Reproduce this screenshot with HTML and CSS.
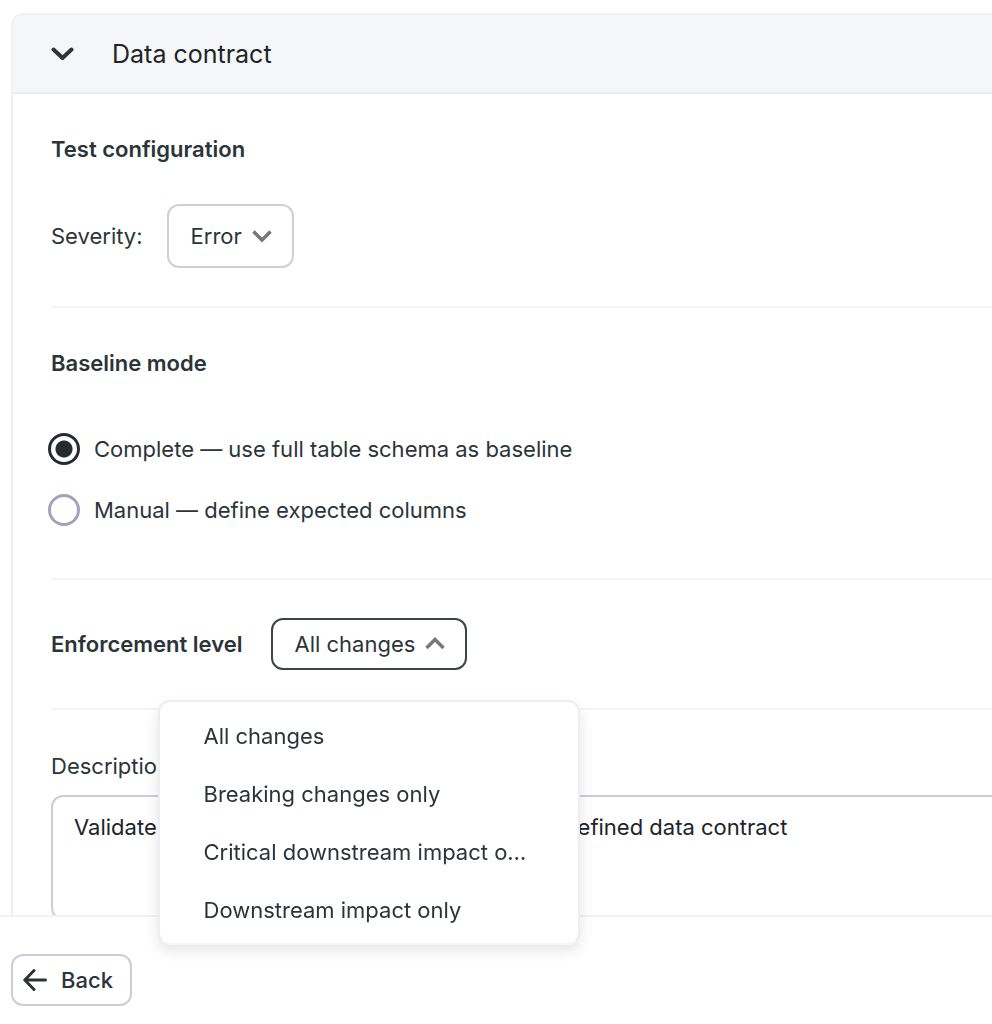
FILE: index.html
```
<!DOCTYPE html>
<html lang="en">
<head>
    <meta charset="utf-8">
    <meta name="viewport" content="width=device-width, initial-scale=1">
    <title>Data contract</title>
    <link rel="stylesheet" href="styles.css">
</head>
<body>
<main class="panel">
    <header class="panel-header">
        <button class="collapse" type="button" aria-label="Collapse" aria-expanded="true">
            <svg width="24" height="24" viewBox="0 0 24 24"><path d="M3.5 7.5l9 8.5 9-8.5"/></svg>
        </button>
        <h1>Data contract</h1>
    </header>
    <form class="panel-body">
        <section class="section">
            <h2>Test configuration</h2>
            <div class="severity">
                <label for="severity">Severity:</label>
                <div class="select">
                    <select id="severity" class="select-severity">
                        <option>Error</option>
                        <option>Warning</option>
                    </select>
                    <svg class="arrow" width="20" height="20" viewBox="0 0 20 20"><path d="M1.5 5.5l8.5 8.5 8.5-8.5"/></svg>
                </div>
            </div>
        </section>
        <section class="section">
            <h2>Baseline mode</h2>
            <div class="radios">
                <label class="radio"><input type="radio" name="baseline" checked>Complete — use full table schema as baseline</label>
                <label class="radio"><input type="radio" name="baseline">Manual — define expected columns</label>
            </div>
        </section>
        <section class="section section-enforcement">
            <label class="title" for="enforcement">Enforcement level</label>
            <div class="select">
                <select id="enforcement" class="select-enforcement open">
                    <option>All changes</option>
                    <option>Breaking changes only</option>
                    <option>Critical downstream impact only</option>
                    <option>Downstream impact only</option>
                </select>
                <svg class="arrow" width="20" height="20" viewBox="0 0 20 20"><path d="M1.5 14l8.5-8.5 8.5 8.5"/></svg>
                <div class="menu" role="listbox" aria-label="Enforcement level">
                    <button type="button" role="option" aria-selected="true">All changes</button>
                    <button type="button" role="option">Breaking changes only</button>
                    <button type="button" role="option">Critical downstream impact only</button>
                    <button type="button" role="option">Downstream impact only</button>
                </div>
            </div>
        </section>
        <section class="description">
            <label for="description">Description</label>
            <textarea id="description">Validate that the table schema conforms to the defined data contract</textarea>
        </section>
    </form>
</main>
<footer class="footer">
    <button class="back" type="button">
        <svg width="24" height="24" viewBox="0 0 24 24"><path d="M22.5 12H2M11 2.5L1.8 12l9.2 9.5"/></svg>
        Back
    </button>
</footer>
</body>
</html>
```
FILE: styles.css
```
* {
    box-sizing: border-box;
}

body {
    margin: 0;
    padding: 13px 0 0 11px;
    height: 100vh;
    overflow: hidden;
    background: #fff;
    color: #2b3439;
    font-family: Inter, "Liberation Sans", sans-serif;
    font-size: 22px;
    line-height: 28px;
}

button, select, textarea {
    font: inherit;
    color: inherit;
}

svg {
    display: block;
    fill: none;
    stroke: currentColor;
    stroke-linecap: round;
    stroke-linejoin: round;
    stroke-width: 3;
}

h1, h2 {
    margin: 0;
}

h1 {
    color: #202428;
    font-size: 25px;
    font-weight: 400;
}

h2, .title {
    font-size: 22px;
    font-weight: 600;
}

.panel {
    border: 2px solid #eff0f1;
    border-right: none;
    border-bottom: none;
    border-radius: 12px 0 0 0;
}

.panel-header {
    display: flex;
    align-items: center;
    gap: 38px;
    height: 79px;
    padding-left: 37px;
    background: #f5f6f8;
    border-bottom: 2px solid #ebedef;
    border-radius: 10px 0 0 0;
}

.collapse {
    padding: 0;
    border: none;
    background: none;
    cursor: pointer;
}

.collapse svg {
    stroke-width: 4;
}

.panel-body {
    padding-left: 38px;
}

.section {
    padding: 41px 0 38px;
    border-bottom: 2px solid #f3f4f5;
}

.severity {
    display: flex;
    align-items: center;
    gap: 24px;
    margin-top: 41px;
}

.select {
    display: grid;
    align-items: center;
    position: relative;
}

.select select {
    grid-area: 1 / 1;
    appearance: none;
    padding: 0 0 0 22px;
    border: 2px solid #d0cede;
    border-radius: 12px;
    background: #fff;
    cursor: pointer;
}

.select .select-severity {
    width: 127px;
    height: 64px;
}

.select .select-enforcement {
    width: 196px;
    height: 52px;
}

.select .open {
    border-color: #3c4449;
}

.arrow {
    grid-area: 1 / 1;
    justify-self: end;
    margin-right: 22px;
    color: #777;
    pointer-events: none;
    stroke-linecap: butt;
    stroke-linejoin: miter;
    stroke-width: 3.5;
}

.radios {
    display: flex;
    flex-direction: column;
    gap: 29px;
    margin: 56px 0 14px -3px;
}

.radio {
    display: flex;
    align-items: center;
    gap: 14px;
    height: 32px;
}

.radio input {
    appearance: none;
    width: 32px;
    height: 32px;
    margin: 0;
    border: 3px solid #a3a2bb;
    border-radius: 50%;
}

.radio input:checked {
    border-color: #242c31;
    background: radial-gradient(circle, #242c31 8px, #fff 9px);
}

.section-enforcement {
    display: flex;
    align-items: center;
    gap: 28px;
    padding: 38px 0;
}

/* dropdown list, centered under its select and above the footer */
.menu {
    position: absolute;
    z-index: 2;
    top: calc(100% + 30px);
    left: 50%;
    width: 422px;
    padding: 5px 0 4px;
    border: 2px solid #eeeef0;
    border-bottom-color: #f6f6f7;
    border-radius: 12px;
    background: #fff;
    box-shadow: 0 6px 14px rgba(0, 0, 0, 0.1);
    transform: translateX(-50%);
}

.menu button {
    display: block;
    width: 100%;
    height: 58px;
    padding: 0 44px;
    border: none;
    background: none;
    text-align: left;
    white-space: nowrap;
    overflow: hidden;
    text-overflow: ellipsis;
    cursor: pointer;
}

.menu button:hover {
    background: #f5f6f8;
}

.description {
    display: flex;
    flex-direction: column;
    gap: 15px;
    padding-top: 42px;
}

.description textarea {
    height: 125px;
    padding: 16px 21px;
    border: 2px solid #cecbdc;
    border-right: none;
    border-radius: 12px 0 0 12px;
    color: #202428;
    resize: none;
}

.footer {
    position: fixed;
    z-index: 1;
    right: 0;
    bottom: 0;
    left: 0;
    padding: 37px 11px 18px;
    border-top: 2px solid #f0f2f3;
    background: #fff;
}

.back {
    display: flex;
    align-items: center;
    gap: 14px;
    height: 52px;
    padding: 0 17px 0 10px;
    border: 2px solid #cecbdc;
    border-radius: 12px;
    background: #fff;
    font-weight: 500;
    cursor: pointer;
}
```
